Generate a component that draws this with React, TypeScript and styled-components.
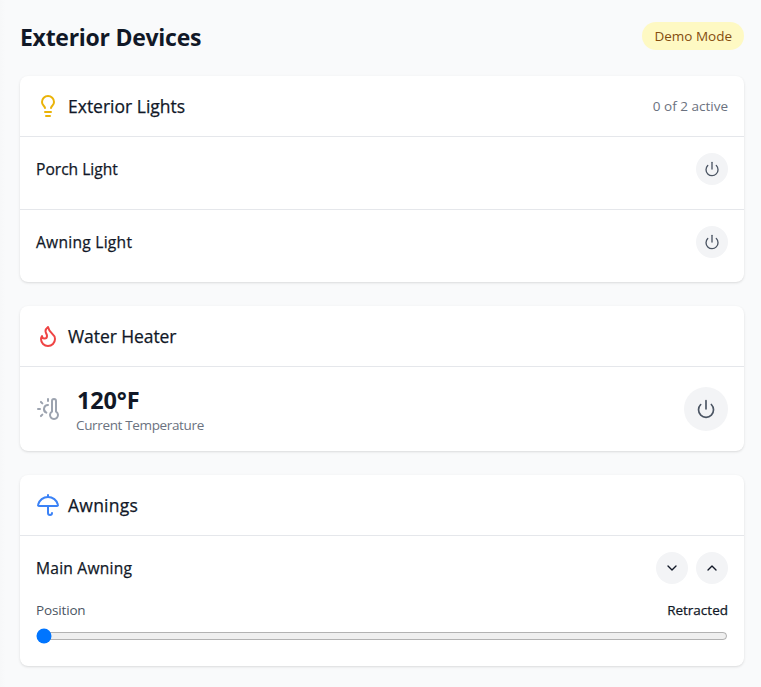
import React from 'react';
import styled, { createGlobalStyle } from 'styled-components';
import { Lightbulb, Power, Flame, ThermometerSun, Umbrella, ChevronDown, ChevronUp } from 'lucide-react';

const GlobalStyle = createGlobalStyle`
  *, *::before, *::after { box-sizing: border-box; }
  body {
    margin: 0;
    background: #f9fafb;
    color: #111827;
    font-family: "Segoe UI", "Open Sans", "Noto Sans", sans-serif;
    font-size: 16px;
    line-height: 24px;
  }
  h1, h2, h3, p { margin: 0; }
  svg { display: block; flex-shrink: 0; }
`;

const Page = styled.main`
  display: flex;
  flex-direction: column;
  gap: 24px;
  min-height: 687px;
  padding: 20px 17px 21px 20px;
  background: linear-gradient(to right, #f7f8f9, #f9fafb 6px);
`;

const PageHeader = styled.header`
  display: flex;
  align-items: center;
  justify-content: space-between;
  height: 32px;
`;

const Title = styled.h1`
  padding-top: 2px;
  font-size: 23px;
  line-height: 32px;
  font-weight: 700;
  letter-spacing: -0.27px;
`;

const Badge = styled.span`
  padding: 4px 12px;
  border-radius: 14px;
  background: #fef9c3;
  color: #854d0e;
  font-size: 13.5px;
  line-height: 20px;
`;

const Card = styled.section`
  background: #fff;
  border-radius: 8px;
  box-shadow: 0 1px 3px rgba(0, 0, 0, 0.1), 0 1px 2px -1px rgba(0, 0, 0, 0.1);
`;

const CardHeader = styled.div`
  display: flex;
  align-items: center;
  justify-content: space-between;
  height: 61px;
  padding: 0 16px;
  border-bottom: 1px solid #e5e7eb;
`;

const Heading = styled.div`
  display: flex;
  align-items: center;
  gap: 8px;
`;

const CardTitle = styled.h2<{ $tracking?: number }>`
  font-size: 17.5px;
  line-height: 28px;
  font-weight: 500;
  letter-spacing: ${(p) => p.$tracking ?? 0}px;
  -webkit-text-stroke: 0.25px currentColor;
`;

const Note = styled.span<{ $tracking?: number; $strong?: boolean }>`
  color: ${(p) => (p.$strong ? '#4b5563' : '#6b7280')};
  font-size: 13.5px;
  line-height: 20px;
  letter-spacing: ${(p) => p.$tracking ?? 0}px;
`;

const LightRow = styled.div`
  display: flex;
  align-items: center;
  justify-content: space-between;
  padding: 16px 16px 24px;
  & + & { border-top: 1px solid #e5e7eb; }
`;

const Name = styled.h3<{ $tracking?: number }>`
  font-size: 15.6px;
  line-height: 24px;
  font-weight: 500;
  letter-spacing: ${(p) => p.$tracking ?? 0}px;
  -webkit-text-stroke: 0.25px currentColor;
`;

const RoundButton = styled.button<{ $size?: number; $dark?: boolean }>`
  display: flex;
  align-items: center;
  justify-content: center;
  width: ${(p) => p.$size ?? 32}px;
  height: ${(p) => p.$size ?? 32}px;
  padding: 0;
  border: 0;
  border-radius: 50%;
  background: #f3f4f6;
  color: ${(p) => (p.$dark ? '#111827' : '#4b5563')};
`;

const HeaterRow = styled.div`
  display: flex;
  align-items: center;
  justify-content: space-between;
  height: 84px;
  padding: 0 16px;
`;

const Reading = styled.div`
  display: flex;
  align-items: center;
  gap: 16px;
  color: #9ca3af;
`;

const Temperature = styled.p`
  padding: 1px 0 0 1px;
  margin-bottom: -1px;
  color: #111827;
  font-size: 23.5px;
  line-height: 32px;
  font-weight: 700;
  letter-spacing: -0.15px;
`;

const TemperatureLabel = styled(Note)`
  display: block;
  letter-spacing: -0.35px;
`;

const AwningBody = styled.div`
  padding: 16px 16px 22px;
`;

const Line = styled.div`
  display: flex;
  align-items: center;
  justify-content: space-between;
`;

const Buttons = styled.div`
  display: flex;
  gap: 8px;
`;

const PositionLine = styled(Line)`
  margin: 16px 0 8px;
`;

const Status = styled.span`
  font-size: 13.5px;
  line-height: 20px;
  font-weight: 500;
  -webkit-text-stroke: 0.25px currentColor;
`;

const Slider = styled.input`
  display: block;
  width: 100%;
  height: 16px;
  margin: 0;
`;

const lights = [
  { name: 'Porch Light', tracking: 0 },
  { name: 'Awning Light', tracking: 0.25 },
];

export default function App() {
  return (
    <>
      <GlobalStyle />
      <Page>
        <PageHeader>
          <Title>Exterior Devices</Title>
          <Badge>Demo Mode</Badge>
        </PageHeader>

        <Card>
          <CardHeader>
            <Heading>
              <Lightbulb size={24} color="#eab308" />
              <CardTitle>Exterior Lights</CardTitle>
            </Heading>
            <Note>0 of 2 active</Note>
          </CardHeader>
          {lights.map(({ name, tracking }) => (
            <LightRow key={name}>
              <Name $tracking={tracking}>{name}</Name>
              <RoundButton aria-label={`Toggle ${name}`}><Power size={16} /></RoundButton>
            </LightRow>
          ))}
        </Card>

        <Card>
          <CardHeader>
            <Heading>
              <Flame size={24} color="#ef4444" />
              <CardTitle $tracking={-0.08}>Water Heater</CardTitle>
            </Heading>
          </CardHeader>
          <HeaterRow>
            <Reading>
              <ThermometerSun size={24} />
              <div>
                <Temperature>120°F</Temperature>
                <TemperatureLabel>Current Temperature</TemperatureLabel>
              </div>
            </Reading>
            <RoundButton $size={44} aria-label="Toggle water heater"><Power size={20} /></RoundButton>
          </HeaterRow>
        </Card>

        <Card>
          <CardHeader>
            <Heading>
              <Umbrella size={24} color="#3b82f6" />
              <CardTitle $tracking={0.25}>Awnings</CardTitle>
            </Heading>
          </CardHeader>
          <AwningBody>
            <Line>
              <Name $tracking={0.22}>Main Awning</Name>
              <Buttons>
                <RoundButton $dark aria-label="Extend"><ChevronDown size={16} /></RoundButton>
                <RoundButton $dark aria-label="Retract"><ChevronUp size={16} /></RoundButton>
              </Buttons>
            </Line>
            <PositionLine>
              <Note $tracking={-0.15} $strong>Position</Note>
              <Status>Retracted</Status>
            </PositionLine>
            <Slider type="range" min={0} max={100} defaultValue={0} aria-label="Position" />
          </AwningBody>
        </Card>
      </Page>
    </>
  );
}
